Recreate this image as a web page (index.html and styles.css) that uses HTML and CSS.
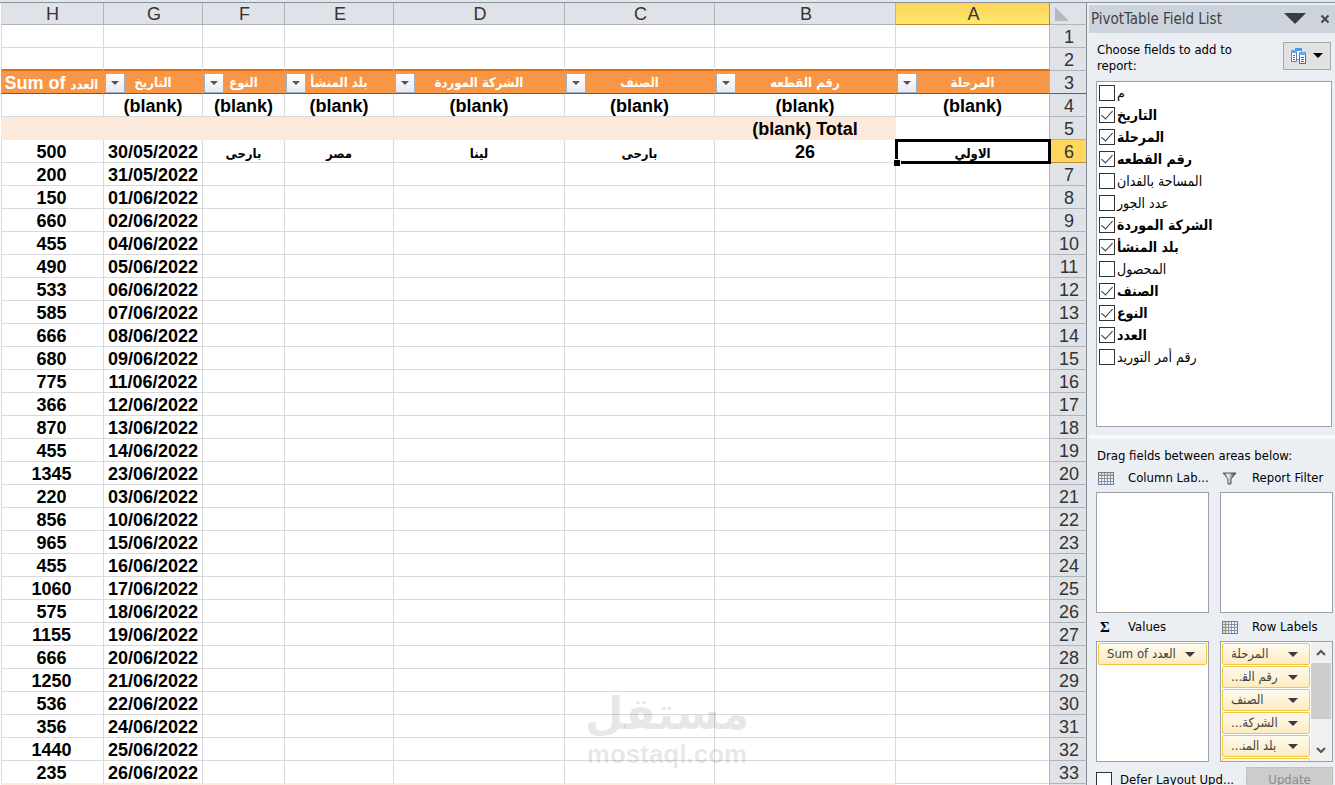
FILE: index.html
```html
<!DOCTYPE html>
<html lang="en">
<head>
  <meta charset="UTF-8">
  <title>PivotTable</title>
  <link rel="stylesheet" href="styles.css">
</head>
<body>
  <main class="sheet">
    <table class="grid" dir="rtl">
      <colgroup>
        <col class="col-num"><col class="col-a"><col class="col-b"><col class="col-c"><col class="col-d"><col class="col-e"><col class="col-f"><col class="col-g"><col class="col-h">
      </colgroup>
      <thead>
        <tr><th class="corner"><svg width="14" height="14" viewBox="0 0 14 14"><path d="M0 0v14h14z" fill="#b4b9c0"/></svg></th><th class="active">A</th><th>B</th><th>C</th><th>D</th><th>E</th><th>F</th><th>G</th><th>H</th></tr>
      </thead>
      <tbody>
        <tr><th>1</th><td></td><td></td><td></td><td></td><td></td><td></td><td></td><td></td></tr>
        <tr class="before-fields"><th>2</th><td></td><td></td><td></td><td></td><td></td><td></td><td></td><td></td></tr>
        <tr class="fields">
          <th>3</th>
          <td><div class="field"><button class="filter" aria-label="Filter"></button><span class="ar">المرحلة</span></div></td>
          <td><div class="field"><button class="filter" aria-label="Filter"></button><span class="ar">رقم القطعه</span></div></td>
          <td><div class="field"><button class="filter" aria-label="Filter"></button><span class="ar">الصنف</span></div></td>
          <td><div class="field"><button class="filter" aria-label="Filter"></button><span class="ar">الشركة الموردة</span></div></td>
          <td><div class="field"><button class="filter" aria-label="Filter"></button><span class="ar">بلد المنشأ</span></div></td>
          <td><div class="field"><button class="filter" aria-label="Filter"></button><span class="ar">النوع</span></div></td>
          <td><div class="field"><button class="filter" aria-label="Filter"></button><span class="ar">التاريخ</span></div></td>
          <td>Sum of <span class="ar">العدد</span></td>
        </tr>
        <tr><th>4</th><td>(blank)</td><td>(blank)</td><td>(blank)</td><td>(blank)</td><td>(blank)</td><td>(blank)</td><td>(blank)</td><td></td></tr>
        <tr class="subtotal"><th>5</th><td></td><td>(blank) Total</td><td></td><td></td><td></td><td></td><td></td><td></td></tr>
        <tr><th class="active">6</th><td class="selected"><span class="ar">الاولي</span></td><td>26</td><td><span class="ar">بارحى</span></td><td><span class="ar">لينا</span></td><td><span class="ar">مصر</span></td><td><span class="ar">بارحى</span></td><td>30/05/2022</td><td>500</td></tr>
        <tr><th>7</th><td></td><td></td><td></td><td></td><td></td><td></td><td>31/05/2022</td><td>200</td></tr>
        <tr><th>8</th><td></td><td></td><td></td><td></td><td></td><td></td><td>01/06/2022</td><td>150</td></tr>
        <tr><th>9</th><td></td><td></td><td></td><td></td><td></td><td></td><td>02/06/2022</td><td>660</td></tr>
        <tr><th>10</th><td></td><td></td><td></td><td></td><td></td><td></td><td>04/06/2022</td><td>455</td></tr>
        <tr><th>11</th><td></td><td></td><td></td><td></td><td></td><td></td><td>05/06/2022</td><td>490</td></tr>
        <tr><th>12</th><td></td><td></td><td></td><td></td><td></td><td></td><td>06/06/2022</td><td>533</td></tr>
        <tr><th>13</th><td></td><td></td><td></td><td></td><td></td><td></td><td>07/06/2022</td><td>585</td></tr>
        <tr><th>14</th><td></td><td></td><td></td><td></td><td></td><td></td><td>08/06/2022</td><td>666</td></tr>
        <tr><th>15</th><td></td><td></td><td></td><td></td><td></td><td></td><td>09/06/2022</td><td>680</td></tr>
        <tr><th>16</th><td></td><td></td><td></td><td></td><td></td><td></td><td>11/06/2022</td><td>775</td></tr>
        <tr><th>17</th><td></td><td></td><td></td><td></td><td></td><td></td><td>12/06/2022</td><td>366</td></tr>
        <tr><th>18</th><td></td><td></td><td></td><td></td><td></td><td></td><td>13/06/2022</td><td>870</td></tr>
        <tr><th>19</th><td></td><td></td><td></td><td></td><td></td><td></td><td>14/06/2022</td><td>455</td></tr>
        <tr><th>20</th><td></td><td></td><td></td><td></td><td></td><td></td><td>23/06/2022</td><td>1345</td></tr>
        <tr><th>21</th><td></td><td></td><td></td><td></td><td></td><td></td><td>03/06/2022</td><td>220</td></tr>
        <tr><th>22</th><td></td><td></td><td></td><td></td><td></td><td></td><td>10/06/2022</td><td>856</td></tr>
        <tr><th>23</th><td></td><td></td><td></td><td></td><td></td><td></td><td>15/06/2022</td><td>965</td></tr>
        <tr><th>24</th><td></td><td></td><td></td><td></td><td></td><td></td><td>16/06/2022</td><td>455</td></tr>
        <tr><th>25</th><td></td><td></td><td></td><td></td><td></td><td></td><td>17/06/2022</td><td>1060</td></tr>
        <tr><th>26</th><td></td><td></td><td></td><td></td><td></td><td></td><td>18/06/2022</td><td>575</td></tr>
        <tr><th>27</th><td></td><td></td><td></td><td></td><td></td><td></td><td>19/06/2022</td><td>1155</td></tr>
        <tr><th>28</th><td></td><td></td><td></td><td></td><td></td><td></td><td>20/06/2022</td><td>666</td></tr>
        <tr><th>29</th><td></td><td></td><td></td><td></td><td></td><td></td><td>21/06/2022</td><td>1250</td></tr>
        <tr><th>30</th><td></td><td></td><td></td><td></td><td></td><td></td><td>22/06/2022</td><td>536</td></tr>
        <tr><th>31</th><td></td><td></td><td></td><td></td><td></td><td></td><td>24/06/2022</td><td>356</td></tr>
        <tr><th>32</th><td></td><td></td><td></td><td></td><td></td><td></td><td>25/06/2022</td><td>1440</td></tr>
        <tr class="last"><th>33</th><td></td><td></td><td></td><td></td><td></td><td></td><td>26/06/2022</td><td>235</td></tr>
        <tr class="subtotal"><th></th><td></td><td></td><td></td><td></td><td></td><td></td><td></td><td></td></tr>
      </tbody>
    </table>
    <div class="watermark"><span class="mark-ar" lang="ar">مستقل</span><span class="mark-en">mostaql.com</span></div>
  </main>

  <aside class="panel">
    <header class="panel-title">
      <h1>PivotTable Field List</h1>
      <button class="plain" aria-label="Options"><svg width="22" height="12" viewBox="0 0 22 12"><path d="M0 0h22L11 11z" fill="#3b3b3f"/></svg></button>
      <button class="plain" aria-label="Close"><svg width="10" height="10" viewBox="0 0 10 10"><path d="M1.500 1.500l7 7M8.500 1.500l-7 7" stroke="#444" stroke-width="2"/></svg></button>
    </header>

    <section class="choose">
      <div class="choose-head">
        <p>Choose fields to add to report:</p>
        <button class="layout" aria-label="Layout">
          <svg width="16" height="16" viewBox="0 0 16 16">
            <path d="M4.500.500h6v11h-6z" fill="#fff" stroke="#7d9fc4"/><path d="M4 0h7v3H4z" fill="#4a9be0"/>
            <path d="M.500 2.500h5v11h-5z" fill="#fff" stroke="#5b7fa8"/><path d="M0 2h6v3H0z" fill="#58a8ea"/>
            <path d="M8.500 4.500h6v11h-6z" fill="#fff" stroke="#44688f"/><path d="M8 4h7v3H8z" fill="#58a8ea"/>
            <path d="M2 7.500h2M2 9.500h2M2 11.500h2M10 9.500h3M10 11.500h3M10 13.500h3" stroke="#44688f"/>
          </svg>
          <svg width="10" height="6" viewBox="0 0 10 6"><path d="M0 0h10L5 5z"/></svg>
        </button>
      </div>
      <ul class="fields-list">
        <li><label><input type="checkbox">م</label></li>
        <li><label><input type="checkbox" checked>التاريخ</label></li>
        <li><label><input type="checkbox" checked>المرحلة</label></li>
        <li><label><input type="checkbox" checked>رقم القطعه</label></li>
        <li><label><input type="checkbox">المساحة بالفدان</label></li>
        <li><label><input type="checkbox">عدد الجور</label></li>
        <li><label><input type="checkbox" checked>الشركة الموردة</label></li>
        <li><label><input type="checkbox" checked>بلد المنشأ</label></li>
        <li><label><input type="checkbox">المحصول</label></li>
        <li><label><input type="checkbox" checked>الصنف</label></li>
        <li><label><input type="checkbox" checked>النوع</label></li>
        <li><label><input type="checkbox" checked>العدد</label></li>
        <li><label><input type="checkbox">رقم أمر التوريد</label></li>
      </ul>
    </section>

    <section class="areas">
      <p>Drag fields between areas below:</p>
      <div class="area-grid">
        <div class="area">
          <h2>
            <svg width="16" height="13" viewBox="0 0 16 13"><path d="M0 0h16v13H0z" fill="#6f7f96"/><path d="M1 1h14v2H1z" fill="#f5dc96"/><path d="M1 4h14v8H1z" fill="#e8f4ff"/><path d="M3.500 1v11M6.500 1v11M9.500 1v11M12.500 1v11M1 6.500h14M1 9.500h14" stroke="#8694a8"/></svg>
            <span>Column Lab...</span>
          </h2>
          <div class="drop"></div>
        </div>
        <div class="area">
          <h2>
            <svg width="16" height="13" viewBox="0 0 16 13"><defs><linearGradient id="funnel"><stop offset="0" stop-color="#555"/><stop offset=".4" stop-color="#f4f4f4"/><stop offset="1" stop-color="#222"/></linearGradient></defs><path d="M1 1h13L9 7v5H6V7z" fill="url(#funnel)" stroke="#555"/></svg>
            <span>Report Filter</span>
          </h2>
          <div class="drop"></div>
        </div>
        <div class="area">
          <h2><span class="sigma">Σ</span><span>Values</span></h2>
          <div class="drop">
            <div class="chips"><button class="chip"><span>Sum of العدد</span></button></div>
          </div>
        </div>
        <div class="area">
          <h2>
            <svg width="16" height="13" viewBox="0 0 16 13"><path d="M0 0h16v13H0z" fill="#6f7f96"/><path d="M1 1h14v11H1z" fill="#e8f4ff"/><path d="M1 1h4v11H1z" fill="#f5dc96"/><path d="M3.500 1v11M6.500 1v11M9.500 1v11M12.500 1v11M1 3.500h14M1 6.500h14M1 9.500h14" stroke="#8694a8"/></svg>
            <span>Row Labels</span>
          </h2>
          <div class="drop">
            <div class="chips">
              <button class="chip"><span dir="rtl">المرحلة</span></button>
              <button class="chip"><span dir="rtl">رقم الق&zwj;...</span></button>
              <button class="chip"><span dir="rtl">الصنف</span></button>
              <button class="chip"><span dir="rtl">الشركة...</span></button>
              <button class="chip"><span dir="rtl">بلد المن&zwj;...</span></button>
              <button class="chip" aria-label="النوع"></button>
            </div>
            <div class="scroll">
              <svg width="10" height="7" viewBox="0 0 10 7"><path d="M1 6l4-4 4 4" fill="none" stroke="#555" stroke-width="2"/></svg>
              <div class="thumb"></div>
              <svg width="10" height="7" viewBox="0 0 10 7"><path d="M1 1l4 4 4-4" fill="none" stroke="#555" stroke-width="2"/></svg>
            </div>
          </div>
        </div>
      </div>
    </section>

    <footer class="panel-foot">
      <label><input type="checkbox">Defer Layout Upd...</label>
      <button class="update" disabled>Update</button>
    </footer>
  </aside>
</body>
</html>
```
FILE: styles.css
```css
* {
  box-sizing: border-box;
}
body {
  margin: 0;
  height: 100vh;
  overflow: hidden;
  display: flex;
  border-top: 2px solid #dfe8f1;
  background: #ebeef3;
  color: #000;
  font-family: "Liberation Sans", Arial, sans-serif;
}
h1, h2, p, ul {
  margin: 0;
  padding: 0;
  font-weight: normal;
}
button {
  font: inherit;
  padding: 0;
  cursor: pointer;
}

/* sheet */
.sheet {
  flex: 1;
  position: relative;
  overflow: hidden;
  padding-left: 1px;
  background: #fff;
  border-top: 1px solid #8a9097;
}
.grid {
  width: 100%;
  table-layout: fixed;
  border-collapse: separate;
  border-spacing: 0;
  font-size: 18px;
  line-height: 20px;
}
.col-num { width: 37px; }
.col-a { width: 154px; }
.col-b { width: 181px; }
.col-c { width: 150px; }
.col-d { width: 171px; }
.col-e { width: 109px; }
.col-f { width: 82px; }
.col-g { width: 99px; }
.col-h { width: 103px; }
.grid th,
.grid td {
  height: 23px;
  padding: 2px 0 0;
  direction: ltr;
  text-align: center;
  white-space: nowrap;
  border-right: 1px solid #d8d9db;
  border-bottom: 1px solid #d8d9db;
}
.grid th {
  font-weight: normal;
  color: #333;
  background: #dfe2e7;
  border-color: #b0b4b9;
}
.grid td {
  padding-right: 2px;
  font-weight: bold;
}
.grid thead th {
  height: 22px;
  padding-top: 1px;
}
.grid td:last-child,
.grid th:last-child {
  border-left: 1px solid #d8d9db;
}
.grid tr th:first-child {
  border-right-color: #868c93;
}
.grid tbody td:nth-child(2) {
  border-right-color: #b0b4b9;
}
.grid .corner {
  text-align: left;
  padding-left: 4px;
}
.corner svg {
  display: block;
}
.grid thead .active {
  background: linear-gradient(#fdd35c, #ffe869);
  border-color: #c28a30;
}
.grid tbody .active {
  background: #ffd75f;
  border-bottom-color: #c28a30;
}
.ar {
  font-family: "DejaVu Sans Condensed", "DejaVu Sans", sans-serif;
  font-size: 13px;
  line-height: 14px;
}
.grid .before-fields td {
  border-bottom: 2px solid #e46c0a;
}
.grid .fields th {
  border-bottom-color: #5f5f5f;
}
.grid .fields td {
  padding-top: 1px;
  color: #fff;
  background: #f79646;
  border-color: #f79646;
  border-bottom-color: #5f5f5f;
}
/* the label is centred in the whole cell, the button lies at its left edge */
.field {
  display: grid;
  align-items: center;
}
.field .ar,
.filter {
  grid-area: 1 / 1;
}
.filter {
  width: 20px;
  height: 20px;
  border: 1px solid #9fb0c4;
  background: linear-gradient(#fff, #e9ebf0);
  display: flex;
  align-items: center;
  justify-content: center;
}
.filter::after {
  content: "";
  border: 4px solid transparent;
  border-top-color: #555;
  border-bottom: 0;
}
.grid .subtotal td:nth-child(n+3) {
  background: #fde9d9;
  border-color: #fde9d9;
}
.grid .last td:nth-child(n+3) {
  border-bottom-color: #fde9d9;
}
.grid .selected {
  position: relative;
  outline: 3px solid #000;
  outline-offset: -2px;
}
.selected::after {
  content: "";
  position: absolute;
  left: -3px;
  bottom: -4px;
  width: 6px;
  height: 6px;
  background: #000;
  border: solid #fff;
  border-width: 1px 1px 0 0;
}
.watermark {
  position: absolute;
  left: 54%;
  top: 686px;
  width: 160px;
  display: flex;
  flex-direction: column;
  align-items: center;
  color: rgba(0, 0, 0, 0.1);
  font-weight: bold;
}
.mark-ar {
  font-family: "DejaVu Sans", sans-serif;
  font-size: 45px;
  line-height: 50px;
}
.mark-en {
  font-size: 26px;
  line-height: 30px;
}

/* field list panel */
.panel {
  width: 248px;
  flex: none;
  display: flex;
  flex-direction: column;
  padding-left: 2px;
  border-top: 1px solid #8a9097;
  font-family: "DejaVu Sans Condensed", "DejaVu Sans", sans-serif;
  font-size: 13px;
  line-height: 16px;
}
.panel-title {
  flex: none;
  display: flex;
  align-items: center;
  gap: 14px;
  height: 28px;
  margin-top: 2px;
  padding: 0 5px 0 2px;
  background: #cdd3dc;
}
.panel-title h1 {
  flex: 1;
  font-size: 15px;
  color: #3f3f46;
}
.plain {
  border: 0;
  background: none;
  display: flex;
}
.choose {
  padding: 9px 3px 8px 7px;
  border-bottom: 4px solid #f8f9fb;
}
.choose-head {
  display: flex;
  justify-content: space-between;
  margin-bottom: 7px;
}
.choose-head p {
  width: 150px;
  padding-left: 1px;
}
.layout {
  width: 48px;
  height: 28px;
  margin-right: 1px;
  border: 1px solid #a9a9a9;
  background: #e1e1e1;
  display: flex;
  align-items: center;
  justify-content: space-evenly;
}
.fields-list {
  height: 346px;
  padding: 0 2px;
  list-style: none;
  font-size: 14px;
  background: #fff;
  border: 1px solid #9da1a7;
}
.fields-list label {
  display: flex;
  align-items: center;
  gap: 2px;
  height: 22px;
}
.fields-list label:has(:checked) {
  font-weight: bold;
}
input[type="checkbox"] {
  appearance: none;
  flex: none;
  width: 16px;
  height: 16px;
  margin: 0;
  border: 1px solid #333;
  background: #fff;
  display: flex;
  justify-content: center;
}
input[type="checkbox"]:checked::after {
  content: "";
  width: 5px;
  height: 10px;
  border: solid #333;
  border-width: 0 1px 1px 0;
  transform: rotate(42deg);
}
.areas {
  padding: 9px 2px 0 7px;
}
.areas p {
  padding-left: 1px;
}
.area-grid {
  display: grid;
  grid-template-columns: 1fr 1fr;
  column-gap: 11px;
}
.area h2 {
  display: flex;
  align-items: center;
  gap: 14px;
  height: 28px;
  padding-left: 2px;
  font-size: 13px;
  white-space: nowrap;
}
.sigma {
  width: 16px;
  padding-left: 2px;
  font-family: "Liberation Serif", serif;
  font-size: 15px;
  font-weight: bold;
}
.drop {
  height: 121px;
  display: flex;
  overflow: hidden;
  background: #fff;
  border: 1px solid #9da1a7;
}
.chips {
  flex: 1;
  padding: 1px 1px 0;
}
.chip {
  width: 100%;
  height: 22px;
  margin-bottom: 1px;
  padding: 0 11px 0 8px;
  display: flex;
  align-items: center;
  justify-content: space-between;
  color: #444;
  background: linear-gradient(#fffaf0, #fdebc0);
  border: 1px solid #f2c744;
  border-radius: 2px;
}
.chip::after {
  content: "";
  border: 5px solid transparent;
  border-top-color: #3b3b3f;
  border-bottom: 0;
}
.scroll {
  width: 21px;
  display: flex;
  flex-direction: column;
  align-items: center;
  justify-content: space-between;
  padding: 7px 1px 7px 0;
  background: #f0f0f0;
}
.thumb {
  width: 100%;
  height: 56px;
  margin: 7px 0 auto;
  background: #cdcdcd;
}
.panel-foot {
  display: flex;
  align-items: flex-start;
  justify-content: space-between;
  padding: 5px 2px 0 7px;
}
.panel-foot label {
  display: flex;
  align-items: center;
  gap: 8px;
  padding-top: 5px;
}
.update {
  width: 87px;
  height: 26px;
  color: #8b8b8b;
  background: #ccc;
  border: 1px dashed #bbb;
}
```
